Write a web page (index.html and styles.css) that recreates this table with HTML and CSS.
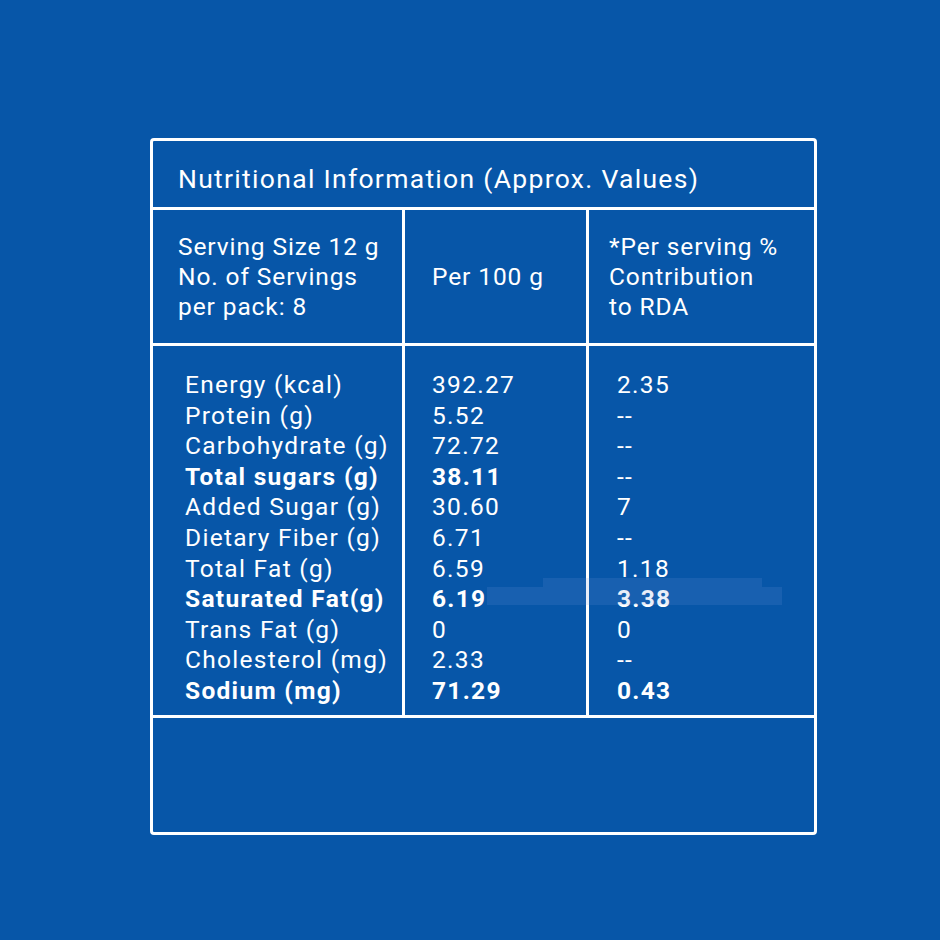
FILE: index.html
```html
<!DOCTYPE html>
<html>
<head>
<meta charset="utf-8">
<link rel="stylesheet" href="styles.css">
</head>
<body>
<div class="card">
  <div class="cell title">Nutritional Information (Approx. Values)</div>
  <div class="cell head c1">Serving Size 12 g<br>No. of Servings<br>per pack: 8</div>
  <div class="cell head c2">Per 100 g</div>
  <div class="cell head c3">*Per serving %<br>Contribution<br>to RDA</div>
  <div class="cell data c1">
    <div>Energy (kcal)</div>
    <div>Protein (g)</div>
    <div>Carbohydrate (g)</div>
    <div class="b">Total sugars (g)</div>
    <div>Added Sugar (g)</div>
    <div>Dietary Fiber (g)</div>
    <div>Total Fat (g)</div>
    <div class="b">Saturated Fat(g)</div>
    <div>Trans Fat (g)</div>
    <div>Cholesterol (mg)</div>
    <div class="b">Sodium (mg)</div>
  </div>
  <div class="cell data c2">
    <div>392.27</div>
    <div>5.52</div>
    <div>72.72</div>
    <div class="b">38.11</div>
    <div>30.60</div>
    <div>6.71</div>
    <div>6.59</div>
    <div class="b">6.19</div>
    <div>0</div>
    <div>2.33</div>
    <div class="b">71.29</div>
  </div>
  <div class="cell data c3">
    <div>2.35</div>
    <div>--</div>
    <div>--</div>
    <div>--</div>
    <div>7</div>
    <div>--</div>
    <div>1.18</div>
    <div class="b">3.38</div>
    <div>0</div>
    <div>--</div>
    <div class="b">0.43</div>
  </div>
  <div class="cell foot"></div>
  <div class="band band-a"></div>
  <div class="band band-b"></div>
</div>
</body>
</html>
```
FILE: styles.css
```css
html, body {
  margin: 0;
  padding: 0;
}
body {
  width: 940px;
  height: 940px;
  background: #0756a8;
  font-family: Roboto, "Liberation Sans", sans-serif;
  color: #ffffff;
  padding-top: 138px;
  padding-left: 150px;
  box-sizing: border-box;
}
.card {
  position: relative;
  width: 667px;
  box-sizing: border-box;
  border: 3px solid #ffffff;
  border-radius: 4px;
  background: #ffffff;
  display: grid;
  grid-template-columns: 249px 181px 225px;
  grid-template-rows: 66px 133px 369px 114px;
  gap: 3px;
  overflow: hidden;
}
.cell {
  background: #0756a8;
  box-sizing: border-box;
  letter-spacing: 1.3px;
}
.title {
  grid-column: 1 / 4;
  font-size: 26.5px;
  padding: 22px 0 0 25px;
  line-height: 32px;
}
.head {
  font-size: 24.5px;
  line-height: 30px;
  display: flex;
  align-items: center;
  letter-spacing: 0.9px;
}
.head.c1 { padding-left: 25px; }
.head.c2 { padding-left: 27px; }
.head.c3 { padding-left: 20px; }
.data {
  font-size: 24.5px;
  line-height: 30.6px;
  padding-top: 24px;
}
.data.c1 { padding-left: 32px; }
.data.c2 { padding-left: 27px; }
.data.c3 { padding-left: 28px; }
.b { font-weight: 700; }
.foot {
  grid-column: 1 / 4;
}
.band {
  position: absolute;
  background: rgba(120, 150, 220, 0.16);
  pointer-events: none;
}
.band-a {
  left: 390px;
  top: 437px;
  width: 219px;
  height: 9px;
}
.band-b {
  left: 334px;
  top: 446px;
  width: 295px;
  height: 18px;
}
```
